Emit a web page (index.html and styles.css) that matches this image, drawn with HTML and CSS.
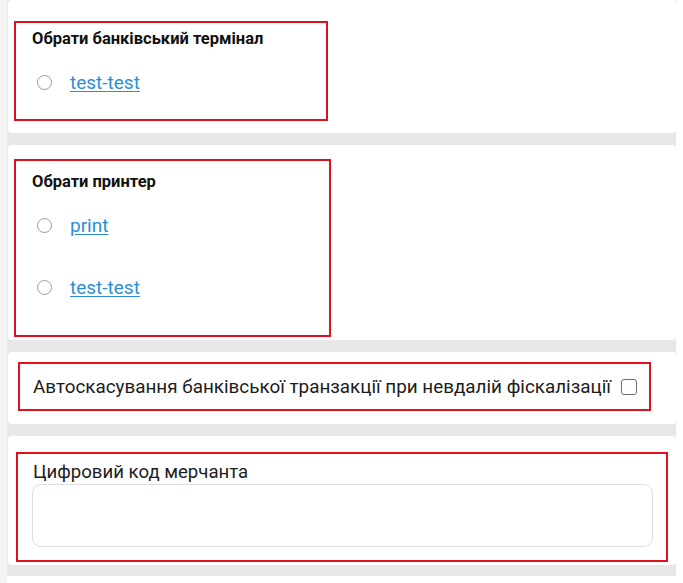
FILE: index.html
```html
<!DOCTYPE html>
<html lang="uk">
<head>
<meta charset="utf-8">
<title>Налаштування</title>
<link rel="stylesheet" href="styles.css">
</head>
<body>
<div class="page">
  <div class="strip"></div>
  <div class="list">
    <section class="card card-first">
      <div class="box box-terminal">
        <div class="title">Обрати банківський термінал</div>
        <div class="options options-one">
          <label class="option"><span class="radio"></span><a class="link" href="#">test-test</a></label>
        </div>
      </div>
    </section>
    <section class="card card-printer">
      <div class="box box-printer">
        <div class="title">Обрати принтер</div>
        <div class="options options-two">
          <label class="option"><span class="radio"></span><a class="link" href="#">print</a></label>
          <label class="option"><span class="radio"></span><a class="link" href="#">test-test</a></label>
        </div>
      </div>
    </section>
    <section class="card card-check">
      <div class="box box-check">
        <span class="check-text">Автоскасування банківської транзакції при невдалій фіскалізації</span>
        <span class="checkbox"></span>
      </div>
    </section>
    <section class="card card-merchant">
      <div class="box box-merchant">
        <div class="field-label">Цифровий код мерчанта</div>
        <div class="input"></div>
      </div>
    </section>
  </div>
  <div class="rightstrip"></div>
</div>
</body>
</html>
```
FILE: styles.css
```css
* { box-sizing: border-box; }
html, body { margin: 0; padding: 0; background: #ffffff; }
body {
  font-family: Roboto, "Noto Sans", Arial, sans-serif;
  color: #1a1a1a;
  width: 683px;
  height: 583px;
  overflow: hidden;
}
.page { display: flex; height: 583px; }
.strip { width: 7px; background: #f3f3f3; flex: none; }
.rightstrip { flex: 1; background: #ffffff; }
.list {
  width: 669px;
  flex: none;
  background: #e8e8e8;
  display: flex;
  flex-direction: column;
  gap: 12px;
  align-self: flex-start;
  padding-bottom: 11px;
}
.card {
  background: #ffffff;
  margin-left: 1px;
  border-radius: 4px;
  display: flex;
}
.box {
  border: 2px solid #e0101c;
}
.title {
  font-size: 16.5px;
  font-weight: 700;
  line-height: 19px;
  color: #111;
}
.options { display: flex; flex-direction: column; }
.option {
  display: flex;
  align-items: center;
  height: 22px;
}
.radio {
  width: 15px;
  height: 15px;
  border: 1.5px solid #9a9a9a;
  border-radius: 50%;
  margin-left: 5px;
  margin-right: 18px;
  flex: none;
}
.link {
  font-size: 19px;
  color: #2a8fd4;
  text-decoration: underline;
  text-underline-offset: 2px;
}

.card-first { height: 133px; padding: 21px 0 0 6px; }
.box-terminal { width: 314px; height: 100px; padding: 6px 0 0 16px; }
.options-one { margin-top: 23px; }

.card-printer { height: 195px; padding: 14px 0 0 6px; }
.box-printer { width: 317px; height: 178px; padding: 11px 0 0 16px; }
.options-two { margin-top: 23px; gap: 40px; }

.card-check { height: 72px; padding: 10px 0 0 10px; }
.box-check {
  width: 633px;
  height: 49px;
  display: flex;
  align-items: center;
  padding: 0 0 0 13px;
}
.check-text { font-size: 18.85px; color: #1c1c1c; }
.checkbox {
  width: 16px;
  height: 16px;
  border: 1.5px solid #6e6e6e;
  border-radius: 3px;
  margin-left: 10px;
  flex: none;
}

.card-merchant { height: 129px; padding: 16px 0 0 8px; }
.box-merchant { width: 652px; height: 110px; padding: 7px 0 0 15px; }
.field-label { font-size: 18.6px; line-height: 22px; color: #1c1c1c; }
.input {
  margin-top: 1px;
  width: 621px;
  height: 63px;
  border: 1px solid #dedede;
  border-radius: 9px;
  margin-left: -1px;
}
```
